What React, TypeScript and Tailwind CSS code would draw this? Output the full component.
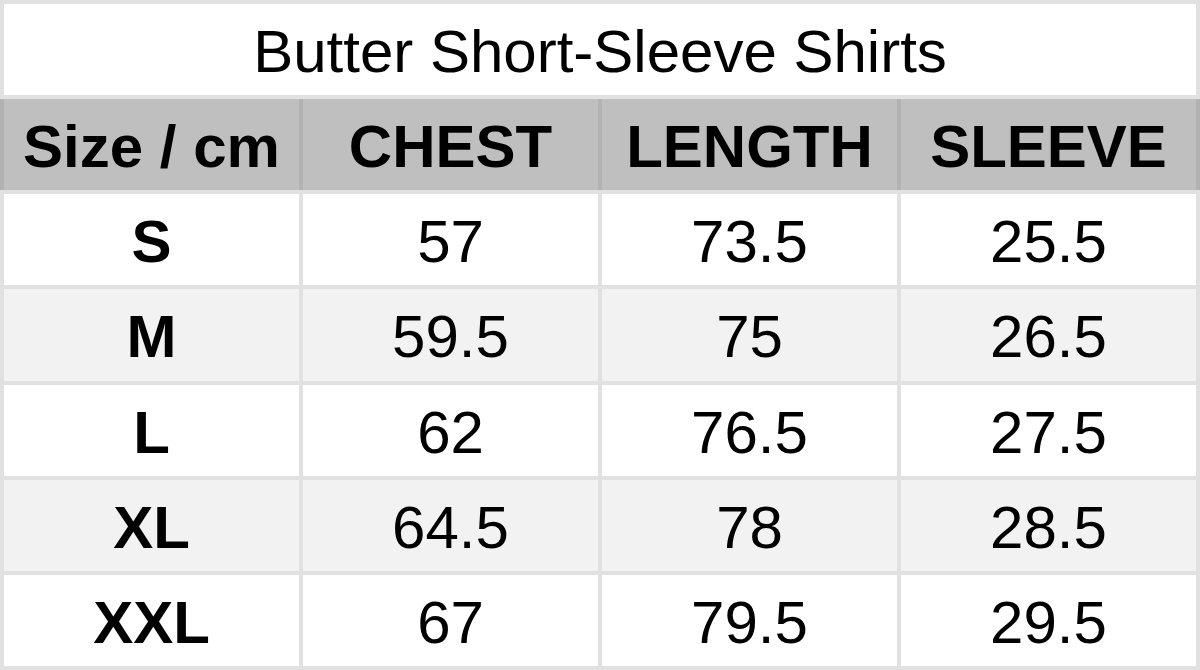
import React from 'react';

const rows = [
  ['S', '57', '73.5', '25.5'],
  ['M', '59.5', '75', '26.5'],
  ['L', '62', '76.5', '27.5'],
  ['XL', '64.5', '78', '28.5'],
  ['XXL', '67', '79.5', '29.5'],
];

const headers = ['Size / cm', 'CHEST', 'LENGTH', 'SLEEVE'];

export default function App() {
  return (
    <div
      className="w-[1200px] h-[670px] bg-[#e1e1e1] py-[4px] flex flex-col gap-[4px] text-black text-[60px] leading-none"
      style={{ fontFamily: '"Liberation Sans", Arial, sans-serif' }}
    >
      {/* Title */}
      <div className="px-[4px] flex-1 flex">
        <div className="flex-1 bg-white flex items-center justify-center pt-[5px]">
          Butter Short-Sleeve Shirts
        </div>
      </div>

      {/* Header row */}
      <div className="flex-1 bg-[#b2b2b2] px-[4px] grid grid-cols-4 gap-[4px]">
        {headers.map((h) => (
          <div key={h} className="bg-[#bfbfbf] font-bold flex items-center justify-center pt-[5px]">
            {h}
          </div>
        ))}
      </div>

      {/* Body */}
      {rows.map((row, i) => (
        <div key={row[0]} className="flex-1 px-[4px] grid grid-cols-4 gap-[4px]">
          {row.map((cell, j) => (
            <div
              key={j}
              className={`${i % 2 === 1 ? 'bg-[#f2f2f2]' : 'bg-white'} ${j === 0 ? 'font-bold' : ''} flex items-center justify-center pt-[5px]`}
            >
              {cell}
            </div>
          ))}
        </div>
      ))}
    </div>
  );
}
